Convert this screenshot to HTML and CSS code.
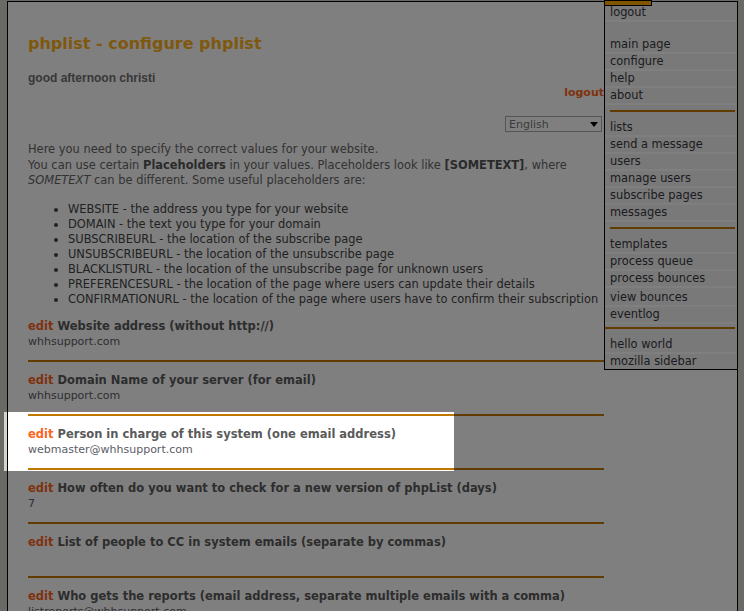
FILE: index.html
```html
<!DOCTYPE html>
<html lang="en">
<head>
    <meta charset="UTF-8" />
    <title>phplist - configure phplist</title>
    <link rel="stylesheet" href="styles.css">
</head>
<body>
    <div class="page">
        <div class="content">
            <h1>phplist - configure phplist</h1>
            <p class="greeting">good afternoon christi</p>
            <div class="logout-row"><a href="#">logout</a></div>

            <div class="lang-row">
                <div class="lang">
                    <select>
                        <option>English</option>
                    </select>
                    <svg class="lang-arrow" width="8" height="5" viewBox="0 0 8 5"><path d="M0 0h8L4 5z" fill="#000"/></svg>
                </div>
            </div>

            <p class="intro">Here you need to specify the correct values for your website.<br>You can use certain <b>Placeholders</b> in your values. Placeholders look like <b>[SOMETEXT]</b>, where<br><i>SOMETEXT</i> can be different. Some useful placeholders are:</p>

            <ul class="placeholders">
                <li>WEBSITE - the address you type for your website</li>
                <li>DOMAIN - the text you type for your domain</li>
                <li>SUBSCRIBEURL - the location of the subscribe page</li>
                <li>UNSUBSCRIBEURL - the location of the unsubscribe page</li>
                <li>BLACKLISTURL - the location of the unsubscribe page for unknown users</li>
                <li>PREFERENCESURL - the location of the page where users can update their details</li>
                <li>CONFIRMATIONURL - the location of the page where users have to confirm their subscription</li>
            </ul>

            <div class="setting">
                <div class="setting-name"><a class="edit" href="#">edit</a> Website address (without http://)</div>
                <div class="setting-value">whhsupport.com</div>
            </div>
            <div class="setting">
                <div class="setting-name"><a class="edit" href="#">edit</a> Domain Name of your server (for email)</div>
                <div class="setting-value">whhsupport.com</div>
            </div>
            <div class="setting focused">
                <div class="spotlight"></div>
                <div class="setting-name"><a class="edit" href="#">edit</a> Person in charge of this system (one email address)</div>
                <div class="setting-value">webmaster@whhsupport.com</div>
            </div>
            <div class="setting">
                <div class="setting-name"><a class="edit" href="#">edit</a> How often do you want to check for a new version of phpList (days)</div>
                <div class="setting-value">7</div>
            </div>
            <div class="setting">
                <div class="setting-name"><a class="edit" href="#">edit</a> List of people to CC in system emails (separate by commas)</div>
                <div class="setting-value"></div>
            </div>
            <div class="setting">
                <div class="setting-name"><a class="edit" href="#">edit</a> Who gets the reports (email address, separate multiple emails with a comma)</div>
                <div class="setting-value">listreports@whhsupport.com</div>
            </div>
            <div class="setting">
                <div class="setting-name"><a class="edit" href="#">edit</a> From email address for system messages</div>
                <div class="setting-value">noreply@whhsupport.com</div>
            </div>
        </div>

        <div class="menu">
            <div class="menu-tab"></div>
            <a href="#">logout</a>
            <div class="gap"></div>
            <a href="#">main page</a>
            <a href="#">configure</a>
            <a href="#">help</a>
            <a href="#">about</a>
            <hr>
            <a href="#">lists</a>
            <a href="#">send a message</a>
            <a href="#">users</a>
            <a href="#">manage users</a>
            <a href="#">subscribe pages</a>
            <a href="#">messages</a>
            <hr>
            <a href="#">templates</a>
            <a href="#">process queue</a>
            <a href="#">process bounces</a>
            <a class="spaced" href="#">view bounces</a>
            <a href="#">eventlog</a>
            <hr class="wide">
            <a href="#">hello world</a>
            <a class="last" href="#">mozilla sidebar</a>
        </div>
    </div>
</body>
</html>
```

FILE: styles.css
```css
* {
    box-sizing: border-box;
}

body {
    margin: 0;
    background-color: #d4d4c8;
    font-family: Verdana, "DejaVu Sans", sans-serif;
    font-size: 11px;
    color: #666;
    overflow: hidden;
}

.page {
    display: flex;
    align-items: flex-start;
    width: 731px;
    margin: 1px 0 0 7px;
    background-color: #fff;
    border: 1px solid #000;
    border-bottom: none;
}

.content {
    flex: 1;
    padding-left: 20px;
}

h1 {
    margin: 32px 0 0;
    font-size: 16px;
    line-height: 20px;
    color: #ffb020;
}

.greeting {
    margin: 17px 0 0;
    font: bold 12px/15px "Liberation Sans", Arial, sans-serif;
    color: #707070;
}

.logout-row {
    margin-top: -1px;
    text-align: right;
    line-height: 15px;
}

.logout-row a {
    color: #ff6420;
    font-weight: bold;
    text-decoration: none;
}

.lang-row {
    display: flex;
    justify-content: flex-end;
    margin-top: 16px;
    padding-right: 2px;
}

.lang {
    position: relative;
    width: 97px;
    height: 16px;
}

.lang select {
    appearance: none;
    -webkit-appearance: none;
    width: 100%;
    height: 16px;
    margin: 0;
    padding: 0 0 0 3px;
    border: 1px solid #aaa;
    border-radius: 0;
    background-color: #fff;
    font-family: Verdana, "DejaVu Sans", sans-serif;
    font-size: 11px;
    color: #777;
}

.lang-arrow {
    position: absolute;
    right: 4px;
    top: 6px;
}

.intro {
    margin: 10px 0 0;
    font-size: 11.45px;
    line-height: 15.5px;
    white-space: nowrap;
}

.intro b {
    color: #555;
}

.placeholders {
    margin: 13px 0 1px;
    padding-left: 40px;
    font-size: 11.45px;
    line-height: 15px;
    color: #444;
}

.placeholders li {
    white-space: nowrap;
}

.setting {
    padding: 11px 0;
    border-bottom: 2px solid #c07800;
}

.setting-name {
    font-size: 11.5px;
    font-weight: bold;
    line-height: 15px;
    color: #5a5a5a;
    white-space: nowrap;
}

.setting-value {
    min-height: 15px;
    line-height: 15px;
    color: #5c5c66;
}

.edit {
    color: #ff6420;
    text-decoration: none;
}

.focused {
    position: relative;
}

/* dims the whole page except the current setting */
.spotlight {
    position: absolute;
    top: -4px;
    left: -24px;
    width: 450px;
    height: 59px;
    box-shadow: 0 0 0 3000px rgba(0, 0, 0, 0.5);
    z-index: 5;
    pointer-events: none;
}

.menu {
    position: relative;
    width: 133px;
    padding-top: 2.5px;
    background-color: #f3f3f3;
    border-left: 1px solid #000;
    border-bottom: 1px solid #000;
}

.menu-tab {
    position: absolute;
    top: -2px;
    left: -1px;
    width: 48px;
    height: 6px;
    background-color: #ffaa00;
    border: 1px solid #000;
}

.menu a {
    display: block;
    padding: 0 5px;
    line-height: 15px;
    font-size: 11.4px;
    color: #383840;
    text-decoration: none;
    border-bottom: 2px solid #fff;
}

.menu a.spaced {
    margin-top: 2px;
}

.menu a.last {
    border-bottom: none;
}

.menu .gap {
    height: 15px;
}

.menu hr {
    margin: 5px 2px 8px 5px;
    border: none;
    border-top: 2px solid #c07800;
}

.menu hr.wide {
    margin: 3.5px 2px 7.5px 0;
}
```
